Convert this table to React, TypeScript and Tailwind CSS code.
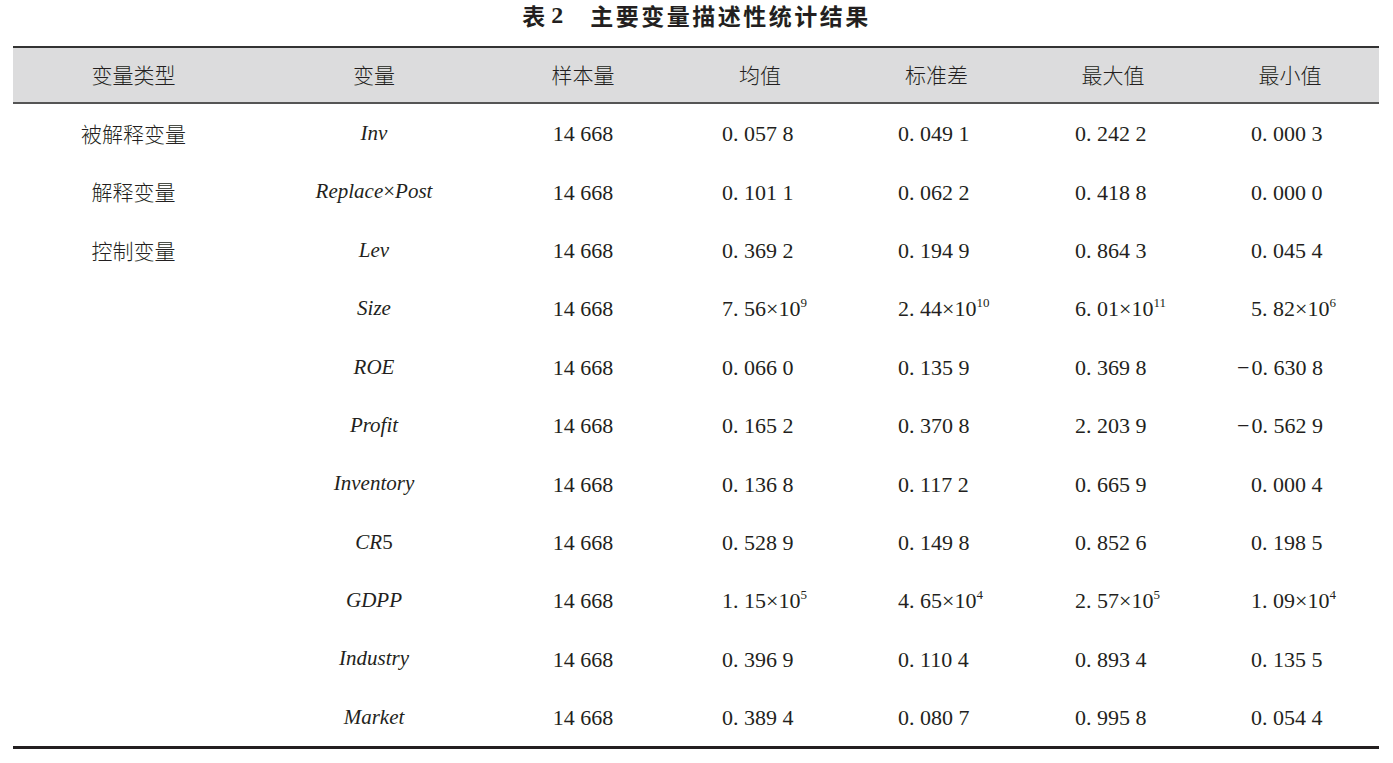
import React from "react";

const serif = "font-['Liberation_Serif','Noto_Sans_CJK_SC',serif]";
const cjk = "font-['Noto_Sans_CJK_SC',sans-serif]";

type Num = { base: string; exp?: string; neg?: boolean };

interface Row {
  type: string;
  name: React.ReactNode;
  mean: Num;
  sd: Num;
  max: Num;
  min: Num;
}

const n = (base: string, exp?: string): Num =>
  base.startsWith("-") ? { base: base.slice(1), exp, neg: true } : { base, exp };

const rows: Row[] = [
  { type: "被解释变量", name: <i>Inv</i>, mean: n("0. 057 8"), sd: n("0. 049 1"), max: n("0. 242 2"), min: n("0. 000 3") },
  {
    type: "解释变量",
    name: (
      <>
        <i>Replace</i>×<i>Post</i>
      </>
    ),
    mean: n("0. 101 1"),
    sd: n("0. 062 2"),
    max: n("0. 418 8"),
    min: n("0. 000 0"),
  },
  { type: "控制变量", name: <i>Lev</i>, mean: n("0. 369 2"), sd: n("0. 194 9"), max: n("0. 864 3"), min: n("0. 045 4") },
  { type: "", name: <i>Size</i>, mean: n("7. 56×10", "9"), sd: n("2. 44×10", "10"), max: n("6. 01×10", "11"), min: n("5. 82×10", "6") },
  { type: "", name: <i>ROE</i>, mean: n("0. 066 0"), sd: n("0. 135 9"), max: n("0. 369 8"), min: n("-0. 630 8") },
  { type: "", name: <i>Profit</i>, mean: n("0. 165 2"), sd: n("0. 370 8"), max: n("2. 203 9"), min: n("-0. 562 9") },
  { type: "", name: <i>Inventory</i>, mean: n("0. 136 8"), sd: n("0. 117 2"), max: n("0. 665 9"), min: n("0. 000 4") },
  {
    type: "",
    name: (
      <>
        <i>CR</i>5
      </>
    ),
    mean: n("0. 528 9"),
    sd: n("0. 149 8"),
    max: n("0. 852 6"),
    min: n("0. 198 5"),
  },
  { type: "", name: <i>GDPP</i>, mean: n("1. 15×10", "5"), sd: n("4. 65×10", "4"), max: n("2. 57×10", "5"), min: n("1. 09×10", "4") },
  { type: "", name: <i>Industry</i>, mean: n("0. 396 9"), sd: n("0. 110 4"), max: n("0. 893 4"), min: n("0. 135 5") },
  { type: "", name: <i>Market</i>, mean: n("0. 389 4"), sd: n("0. 080 7"), max: n("0. 995 8"), min: n("0. 054 4") },
];

const cols = ["w-[241px]", "w-[240px]", "w-[178px]", "w-[176px]", "w-[177px]", "w-[176px]", "w-[178px]"];
const headers = ["变量类型", "变量", "样本量", "均值", "标准差", "最大值", "最小值"];

function NumCell({ v, w }: { v: Num; w: string }) {
  return (
    <div className={`${w} pl-[50px] text-left`}>
      {v.neg && <span className="-ml-[14px] mr-[2px]">−</span>}
      {v.base}
      {v.exp && <sup className="-top-[9px] text-[13px]">{v.exp}</sup>}
    </div>
  );
}

export default function App() {
  return (
    <div className="h-[763px] w-[1393px] bg-white text-[#231f20]">
      <div className="flex h-[30px] items-center justify-center">
        <span className={`${cjk} text-[23px] font-bold`}>表</span>
        <span className={`${serif} ml-[6px] text-[24px] font-bold`}>2</span>
        <span className={`${cjk} ml-[27px] text-[23px] font-bold tracking-[2.5px]`}>主要变量描述性统计结果</span>
      </div>

      <div className="ml-[13px] mt-[16px] w-[1366px]">
        <div className="flex h-[58px] items-center border-t-2 border-b-2 border-t-[#333] border-b-[#555] bg-[#dcdcdd] text-center">
          {headers.map((h, i) => (
            <div key={h} className={`${cols[i]} ${cjk} text-[21px] font-light`}>
              {h}
            </div>
          ))}
        </div>

        {rows.map((r, i) => (
          <div key={i} className={`flex h-[58.4px] items-center pt-[1px] text-center ${serif} text-[22px]`}>
            <div className={`${cols[0]} ${cjk} text-[21px] font-light`}>{r.type}</div>
            <div className={`${cols[1]} text-[21px]`}>{r.name}</div>
            <div className={cols[2]}>14 668</div>
            <NumCell v={r.mean} w={cols[3]} />
            <NumCell v={r.sd} w={cols[4]} />
            <NumCell v={r.max} w={cols[5]} />
            <NumCell v={r.min} w={cols[6]} />
          </div>
        ))}

        <div className="border-t-[3px] border-[#231f20]" />
      </div>
    </div>
  );
}
